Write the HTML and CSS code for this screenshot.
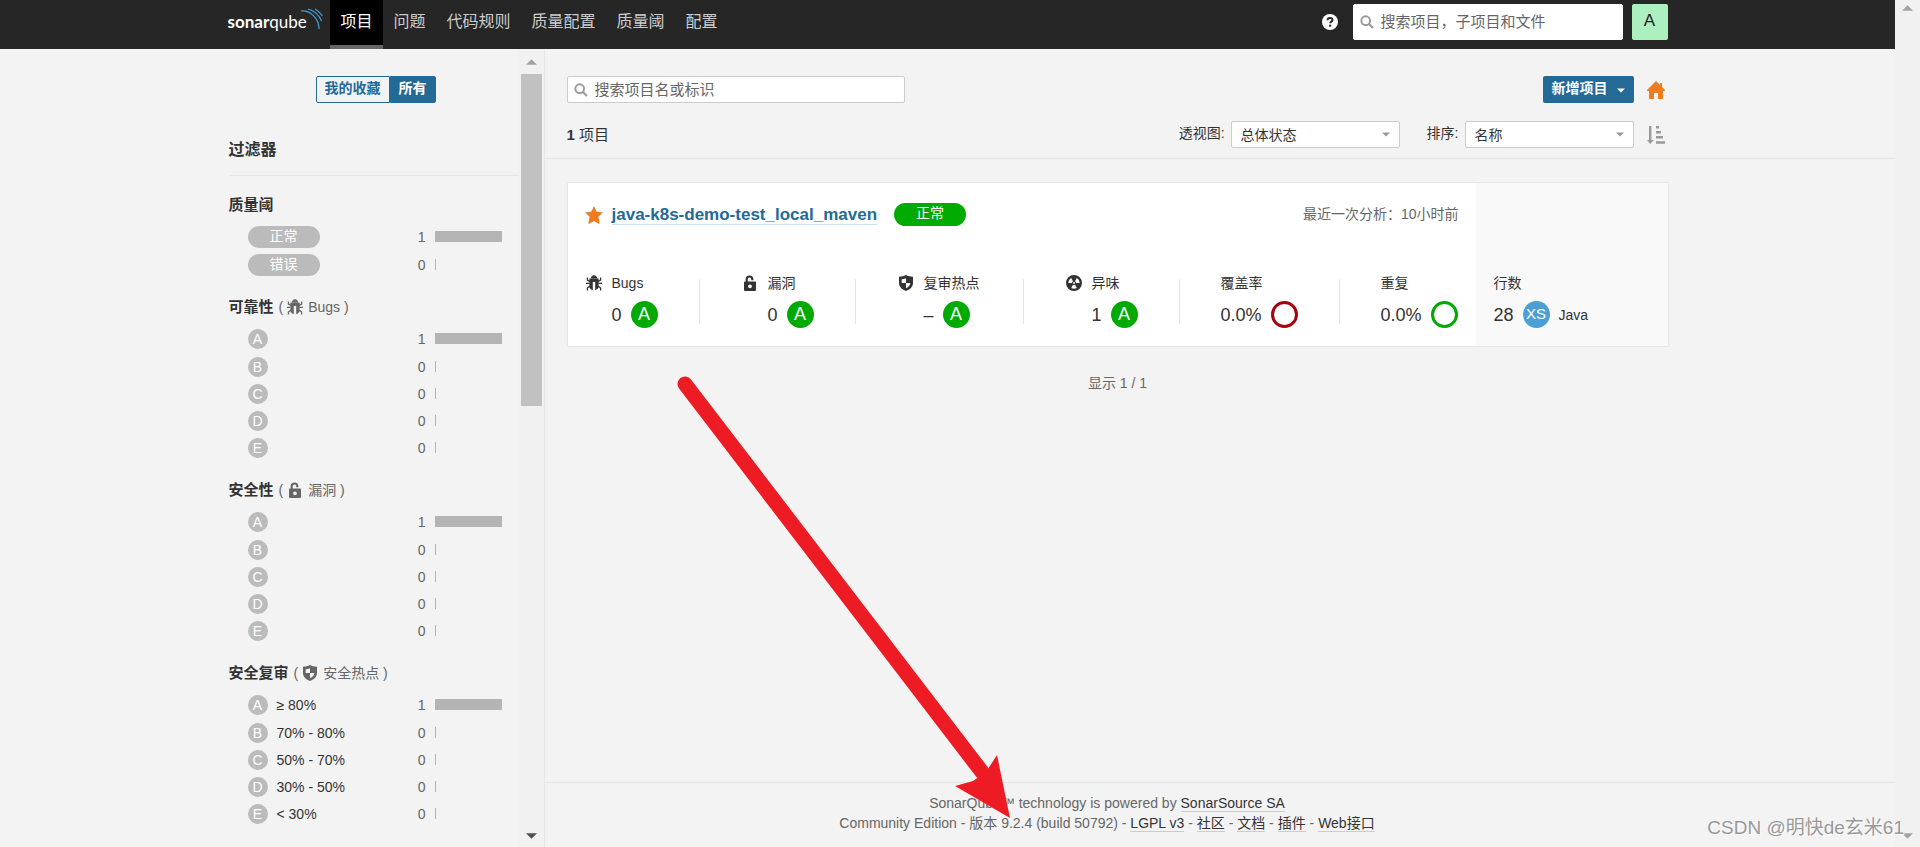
FILE: index.html
```html
<!DOCTYPE html>
<html lang="zh-CN">
<head>
<meta charset="utf-8">
<title>项目 - SonarQube</title>
<link rel="stylesheet" href="styles.css">
</head>
<body>
<svg class="defs" aria-hidden="true">
  <symbol id="bug" viewBox="0 0 16 16"><path d="M4.800 3.600C5 1.600 6.200.2 8 .2s3 1.400 3.200 3.400z"/><path d="M3.400 3.600h9.200v9c-1 1.500-2 2.400-3.400 2.700V7H6.800v8.300c-1.400-.3-2.400-1.200-3.400-2.700z"/><path d="M0 8.300h3.600M12.400 8.300H16M4 6.300 1.400 5V2.600M12 6.300 14.600 5V2.600M4 11l-2.600 2v2.500M12 11l2.600 2v2.500" fill="none" stroke="currentColor" stroke-width="1.300"/></symbol>
  <symbol id="lock" viewBox="0 0 16 16"><path fill-rule="evenodd" d="M3 6.500h.6V4.400a3.900 3.900 0 0 1 7.800 0v.8H9.300v-.8a1.800 1.800 0 0 0-3.600 0v2.100H13a1 1 0 0 1 1 1V15a1 1 0 0 1-1 1H3a1 1 0 0 1-1-1V7.500a1 1 0 0 1 1-1zm5 2.900a1.900 1.900 0 1 0 0 3.800 1.900 1.900 0 0 0 0-3.800z"/></symbol>
  <symbol id="shield" viewBox="0 0 16 16"><path fill-rule="evenodd" d="M8 0c2 1.200 4.300 1.700 7 1.700V8c0 3.500-2.500 6.300-7 8-4.500-1.700-7-4.500-7-8V1.700C3.700 1.700 6 1.200 8 0zm0 3.200C6.700 3.800 5.200 4.200 3.700 4.300V8H8zM8 8v5.200c2.700-1.200 4.200-3 4.300-5.200z"/></symbol>
  <symbol id="smell" viewBox="0 0 16 16"><path fill-rule="evenodd" d="M8 0a8 8 0 1 1 0 16A8 8 0 0 1 8 0zM5.200 3 7 6.200a2 2 0 0 0-1 1.700H2.300A5.700 5.700 0 0 1 5.200 3zm5.600 0L9 6.200a2 2 0 0 1 1 1.700h3.700A5.700 5.700 0 0 0 10.800 3zM7 9.700 5.200 12.900a5.700 5.700 0 0 0 5.600 0L9 9.700a2 2 0 0 1-2 0zM8 7a1 1 0 1 0 0 2 1 1 0 0 0 0-2z"/></symbol>
  <symbol id="search" viewBox="0 0 16 16"><circle cx="6.500" cy="6.500" r="5" fill="none" stroke="currentColor" stroke-width="2.200"/><path d="m10 10 4.800 4.800" stroke="currentColor" stroke-width="2.400"/></symbol>
  <symbol id="up" viewBox="0 0 12 6"><path d="M0 6 6 0l6 6z"/></symbol>
  <symbol id="down" viewBox="0 0 12 6"><path d="M0 0h12L6 6z"/></symbol>
</svg>
<div class="app">
  <header class="topbar">
    <div class="topbar-inner">
      <a class="logo" href="#" aria-label="sonarqube"><span class="logo-text"><b>sonar</b>qube</span><svg class="logo-waves" viewBox="0 0 22 22"><path d="M0 3c10-1 18 8 18 18M7 1c7 2 11 6 13.500 12M14 1c4 2 5.500 4 7.500 7" fill="none" stroke="#4b9fd5" stroke-width="1.200"/></svg></a>
      <nav class="nav"><a class="active" href="#">项目</a><a href="#">问题</a><a href="#">代码规则</a><a href="#">质量配置</a><a href="#">质量阈</a><a href="#">配置</a></nav>
      <div class="tools">
        <a class="help" href="#" aria-label="帮助"><svg viewBox="0 0 16 16"><circle cx="8" cy="8" r="8" fill="#fff"/><path d="M5.600 6.200C5.600 4.700 6.600 4 8 4s2.500.8 2.500 2c0 1.600-2.300 1.600-2.300 3.300" fill="none" stroke="#262626" stroke-width="2"/><path d="M7.100 10.700h2.100v2H7.100z" fill="#262626"/></svg></a>
        <label class="search global"><svg><use href="#search"/></svg><input type="text" placeholder="搜索项目，子项目和文件" aria-label="搜索项目，子项目和文件"></label>
        <button class="avatar" type="button">A</button>
      </div>
    </div>
  </header>
  <div class="body">
    <aside class="side">
      <div class="filters">
        <div class="toggle"><button type="button">我的收藏</button><button class="on" type="button">所有</button></div>
        <h2>过滤器</h2>
        <section class="facet">
          <h3>质量阈</h3>
          <a class="row" href="#"><span class="level">正常</span><span class="count">1</span><span class="bar full"></span></a>
          <a class="row" href="#"><span class="level">错误</span><span class="count">0</span><span class="bar"></span></a>
        </section>
        <section class="facet">
          <h3>可靠性 <small>( <svg><use href="#bug"/></svg> Bugs )</small></h3>
          <a class="row" href="#"><span class="grade">A</span><span class="count">1</span><span class="bar full"></span></a>
          <a class="row" href="#"><span class="grade">B</span><span class="count">0</span><span class="bar"></span></a>
          <a class="row" href="#"><span class="grade">C</span><span class="count">0</span><span class="bar"></span></a>
          <a class="row" href="#"><span class="grade">D</span><span class="count">0</span><span class="bar"></span></a>
          <a class="row" href="#"><span class="grade">E</span><span class="count">0</span><span class="bar"></span></a>
        </section>
        <section class="facet">
          <h3>安全性 <small>( <svg><use href="#lock"/></svg> 漏洞 )</small></h3>
          <a class="row" href="#"><span class="grade">A</span><span class="count">1</span><span class="bar full"></span></a>
          <a class="row" href="#"><span class="grade">B</span><span class="count">0</span><span class="bar"></span></a>
          <a class="row" href="#"><span class="grade">C</span><span class="count">0</span><span class="bar"></span></a>
          <a class="row" href="#"><span class="grade">D</span><span class="count">0</span><span class="bar"></span></a>
          <a class="row" href="#"><span class="grade">E</span><span class="count">0</span><span class="bar"></span></a>
        </section>
        <section class="facet">
          <h3>安全复审 <small>( <svg><use href="#shield"/></svg> 安全热点 )</small></h3>
          <a class="row" href="#"><span class="grade">A</span><span>≥ 80%</span><span class="count">1</span><span class="bar full"></span></a>
          <a class="row" href="#"><span class="grade">B</span><span>70% - 80%</span><span class="count">0</span><span class="bar"></span></a>
          <a class="row" href="#"><span class="grade">C</span><span>50% - 70%</span><span class="count">0</span><span class="bar"></span></a>
          <a class="row" href="#"><span class="grade">D</span><span>30% - 50%</span><span class="count">0</span><span class="bar"></span></a>
          <a class="row" href="#"><span class="grade">E</span><span>&lt; 30%</span><span class="count">0</span><span class="bar"></span></a>
        </section>
      </div>
      <div class="track"><svg><use href="#up"/></svg><i class="thumb"></i><svg class="dark"><use href="#down"/></svg></div>
    </aside>
    <main class="main">
      <div class="head">
        <div class="line">
          <label class="search"><svg><use href="#search"/></svg><input type="text" placeholder="搜索项目名或标识" aria-label="搜索项目名或标识"></label>
          <div class="actions"><button class="create" type="button">新增项目<svg><use href="#down"/></svg></button><a class="icon home" href="#" aria-label="主页"><svg viewBox="0 0 18 18"><path d="M9 0 0 9v1h2v8h5v-6h4v6h5v-8h2V9l-3-3V2h-2v2z"/></svg></a></div>
        </div>
        <div class="line second">
          <div class="total"><b>1</b> 项目</div>
          <div class="actions">
            <label for="view">透视图:</label><span class="select"><select id="view"><option>总体状态</option></select><svg><use href="#down"/></svg></span>
            <label class="sort-label" for="sort">排序:</label><span class="select"><select id="sort"><option>名称</option></select><svg><use href="#down"/></svg></span>
            <button class="icon sort" type="button" aria-label="升序"><svg viewBox="0 0 18 18"><path d="M2 0h2.400v14h2.400L3.200 18 0 14h2zM9 0h3v2.500H9zM9 5h5v2.500H9zM9 10h7v2.500H9zM9 15.200h9v2.500H9z"/></svg></button>
          </div>
        </div>
      </div>
      <div class="content">
        <article class="card">
          <div class="card-main">
            <div class="title">
              <svg class="star" viewBox="0 0 18 18"><path d="m9 0 2.700 5.700 6.300.8-4.600 4.200 1.200 6.300q.1 1-.9.700L9 15l-4.700 2.700q-1 .3-.9-.7l1.200-6.300L0 6.500l6.300-.8z"/></svg>
              <a class="name" href="#">java-k8s-demo-test_local_maven</a>
              <span class="status">正常</span>
              <span class="when">最近一次分析：10小时前</span>
            </div>
            <div class="measures">
              <div class="m"><div class="label"><svg><use href="#bug"/></svg>Bugs</div><div class="value">0<span class="rating">A</span></div></div>
              <div class="m"><div class="label"><svg><use href="#lock"/></svg>漏洞</div><div class="value">0<span class="rating">A</span></div></div>
              <div class="m"><div class="label"><svg><use href="#shield"/></svg>复审热点</div><div class="value">–<span class="rating">A</span></div></div>
              <div class="m"><div class="label"><svg><use href="#smell"/></svg>异味</div><div class="value">1<span class="rating">A</span></div></div>
              <div class="m plain"><div class="label">覆盖率</div><div class="value">0.0%<span class="ring red"></span></div></div>
              <div class="m plain last"><div class="label">重复</div><div class="value">0.0%<span class="ring"></span></div></div>
            </div>
          </div>
          <div class="card-side"><div class="label">行数</div><div class="value">28<span class="rating size">XS</span><span class="lang">Java</span></div></div>
        </article>
        <p class="shown">显示 1 / 1</p>
      </div>
      <footer class="footer">
        <div>SonarQube™ technology is powered by <a href="#">SonarSource SA</a></div>
        <div>Community Edition - 版本 9.2.4 (build 50792) - <a href="#">LGPL v3</a> - <a href="#">社区</a> - <a href="#">文档</a> - <a href="#">插件</a> - <a href="#">Web接口</a></div>
      </footer>
    </main>
  </div>
</div>
<div class="page-track"><svg><use href="#up"/></svg><svg><use href="#down"/></svg></div>
<svg class="arrow" viewBox="0 0 340 446" aria-hidden="true"><path d="M13 12 310 400" stroke="#ed1c24" stroke-width="15" stroke-linecap="round"/><path d="m338 446-13-63-11 17-13 9-18 5z" fill="#ed1c24"/></svg>
<div class="watermark">CSDN @明快de玄米61</div>
</body>
</html>
```
FILE: styles.css
```css
* { box-sizing: border-box; }
body {
  margin: 0;
  display: flex;
  height: 100vh;
  overflow: hidden;
  position: relative;
  background: #f3f3f3;
  color: #333;
  font: 14px/20px "Liberation Sans", "Noto Sans CJK SC", sans-serif;
}
a { color: inherit; text-decoration: none; }
button, input, select { font: inherit; margin: 0; }
svg { fill: currentColor; flex: none; }
.defs { position: absolute; width: 0; height: 0; }
.app { flex: 1; min-width: 0; display: flex; flex-direction: column; }

.topbar { background: #262626; height: 49px; flex: none; }
.topbar-inner { max-width: 1440px; margin: 0 auto; height: 100%; display: flex; }
.logo { width: 102px; display: flex; color: #fff; padding-top: 8px; }
.logo-text { font: 17px/27px Lato, sans-serif; }
.logo-waves { width: 22px; height: 22px; margin-left: -6px; }
.nav { display: flex; font-size: 16px; color: #ccc; }
.nav a { padding: 0 10px 0 11px; line-height: 43px; border-bottom: 4px solid transparent; }
.nav .active { background: #000; border-color: #666; color: #fff; }
.tools { margin-left: auto; display: flex; align-items: flex-start; padding-top: 4px; }
.help { margin: 10px 15px 0 0; }
.help svg { width: 16px; height: 16px; display: block; }
.search {
  display: flex;
  align-items: center;
  gap: 7px;
  width: 338px;
  height: 27px;
  padding: 0 6px;
  background: #fff;
  border: 1px solid #ccc;
  border-radius: 2px;
  color: #999;
  font-size: 15px;
}
.search svg { width: 14px; height: 14px; }
.search input { flex: 1; min-width: 0; border: 0; padding: 0; outline: 0; background: none; color: #333; }
.search input::placeholder { color: #666; opacity: 1; }
.search.global { width: 270px; height: 36px; margin-right: 9px; border-color: #fff; }
.avatar { width: 36px; height: 36px; border: 0; border-radius: 2px; background: #adf0c0; color: #222; font-size: 17px; padding: 0 0 2px; }

.body { flex: 1; min-height: 0; display: flex; }
.side { width: calc(50% - 403px); flex: none; display: flex; border-right: 1px solid #e6e6e6; }
.filters { flex: 1; padding: 27px 0 0 calc(100% - 315px); overflow: hidden; }
.toggle { display: flex; justify-content: center; padding-left: 4px; }
.toggle button { height: 27px; padding: 0 8px 3px; border: 1px solid #236a97; background: none; color: #236a97; font-weight: bold; border-radius: 2px 0 0 2px; }
.toggle .on { background: #236a97; color: #fff; border-radius: 0 2px 2px 0; }
h2 { margin: 36px 0 18px; padding-bottom: 14px; border-bottom: 1px solid #e6e6e6; font: bold 16px/22px "Liberation Sans", "Noto Sans CJK SC", sans-serif; }
h3 { margin: 0; height: 22px; line-height: 22px; font-size: 15px; display: flex; gap: 5px; }
h3 small { font-size: 14px; font-weight: normal; color: #666; display: flex; align-items: center; gap: 4px; }
h3 svg { width: 16px; height: 16px; margin-right: 1px; }
.facet { margin-bottom: 18px; }
.row { display: flex; align-items: center; height: 27px; padding: 0 17px 0 19px; gap: 9px; }
h3 + .row { margin: 7px 0 1px; }
.level, .grade { background: #bbb; color: #fff; text-align: center; }
.level { width: 72px; height: 22px; border-radius: 11px; }
.grade { width: 20px; height: 20px; border-radius: 50%; }
.count { margin-left: auto; color: #666; }
.bar { width: 67px; height: 11px; border-left: 1px solid #b4b4b4; }
.bar.full { background: #b4b4b4; }
.track { width: 25px; padding: 10px 2px 8px; background: #f1f1f1; display: flex; flex-direction: column; align-items: center; }
.track svg, .page-track svg { width: 11px; height: 6px; color: #a3a3a3; }
.track .dark { color: #505050; margin-top: auto; }
.thumb { width: 21px; height: 332px; margin-top: 9px; background: #c1c1c1; }

.main { flex: 1; min-width: 0; display: flex; flex-direction: column; }
.head { padding: 27px 22px 10px; border-bottom: 1px solid #e6e6e6; }
.line { display: flex; justify-content: space-between; max-width: 1101px; }
.second { margin-top: 18px; align-items: center; }
.total { font-size: 15px; }
.actions { display: flex; align-items: center; }
.actions label { margin-right: 6px; padding-bottom: 4px; }
.actions .sort-label { margin-left: 27px; }
.create { display: flex; align-items: center; gap: 9px; height: 27px; padding: 0 9px 3px; border: 0; border-radius: 2px; background: #236a97; color: #fff; font-weight: bold; }
.create svg { width: 8px; height: 5px; margin-top: 4px; }
.icon { border: 0; background: none; padding: 0; margin-left: 13px; width: 21px; }
.icon svg { width: 18px; height: 18px; display: block; }
.home { color: #ed7d20; }
.sort { color: #999; }
.select { position: relative; }
.select select { appearance: none; display: block; width: 169px; height: 27px; padding: 0 9px; border: 1px solid #ccc; border-radius: 2px; background: #fff; color: #333; }
.select svg { position: absolute; right: 10px; top: 11px; width: 8px; height: 5px; color: #999; pointer-events: none; }

.content { flex: 1; padding: 23px 22px; }
.card { display: flex; max-width: 1102px; min-height: 165px; background: #fff; border: 1px solid #e6e6e6; border-radius: 2px; }
.card-main { flex: 1; padding: 20px 17px 0; }
.title { display: flex; align-items: center; height: 23px; }
.star { width: 18px; height: 18px; color: #ed7d20; margin-right: 9px; }
.name { color: #236a97; border-bottom: 1px solid #cae3f2; font-size: 17px; line-height: 19px; font-weight: bold; }
.status { width: 72px; height: 23px; margin-left: 17px; border-radius: 12px; background: #0a0; color: #fff; text-align: center; line-height: 21px; }
.when { margin-left: auto; padding-bottom: 2px; color: #666; }
.measures { display: grid; grid-template-columns: 156fr 156fr 168fr 156fr 160fr 78fr; margin-top: 46px; }
.m { min-width: 0; padding-left: 27px; position: relative; }
.m.plain { padding-left: 0; }
.m:not(.last)::after { content: ""; position: absolute; right: 41px; top: 7px; height: 45px; border-right: 1px solid #e6e6e6; }
.label { height: 22px; line-height: 22px; display: flex; align-items: center; }
.label svg { width: 16px; height: 16px; margin: 0 10px 0 -26px; }
.value { display: flex; align-items: center; margin-top: 7px; height: 27px; font-size: 18px; }
.rating, .ring { width: 27px; height: 27px; margin-left: 9px; border-radius: 50%; }
.rating { background: #0a0; color: #fff; text-align: center; line-height: 26px; }
.rating.size { background: #4b9fd5; font-size: 15px; }
.ring { border: 3px solid #0a0; }
.ring.red { border-color: #a4030f; }
.card-side { width: 192px; padding: 89px 18px 0; background: #f9f9f9; }
.lang { font-size: 14px; margin-left: 9px; }
.shown { max-width: 1102px; margin: 26px 0 0; text-align: center; color: #666; }
.footer { border-top: 1px solid #e6e6e6; padding: 10px 22px 14px; color: #666; text-align: center; min-height: 65px; }
.footer div { max-width: 1081px; }
.footer a { color: #333; border-bottom: 1px solid #ccc; }

.page-track { width: 25px; flex: none; background: #f1f1f1; display: flex; flex-direction: column; justify-content: space-between; align-items: center; padding: 5px 0 8px; }
.arrow { position: absolute; left: 672px; top: 372px; width: 340px; height: 446px; pointer-events: none; }
.watermark { position: absolute; right: 16px; bottom: 5px; font-size: 19px; line-height: 28px; color: #999; text-shadow: 1px 1px 0 #fff; }
```
